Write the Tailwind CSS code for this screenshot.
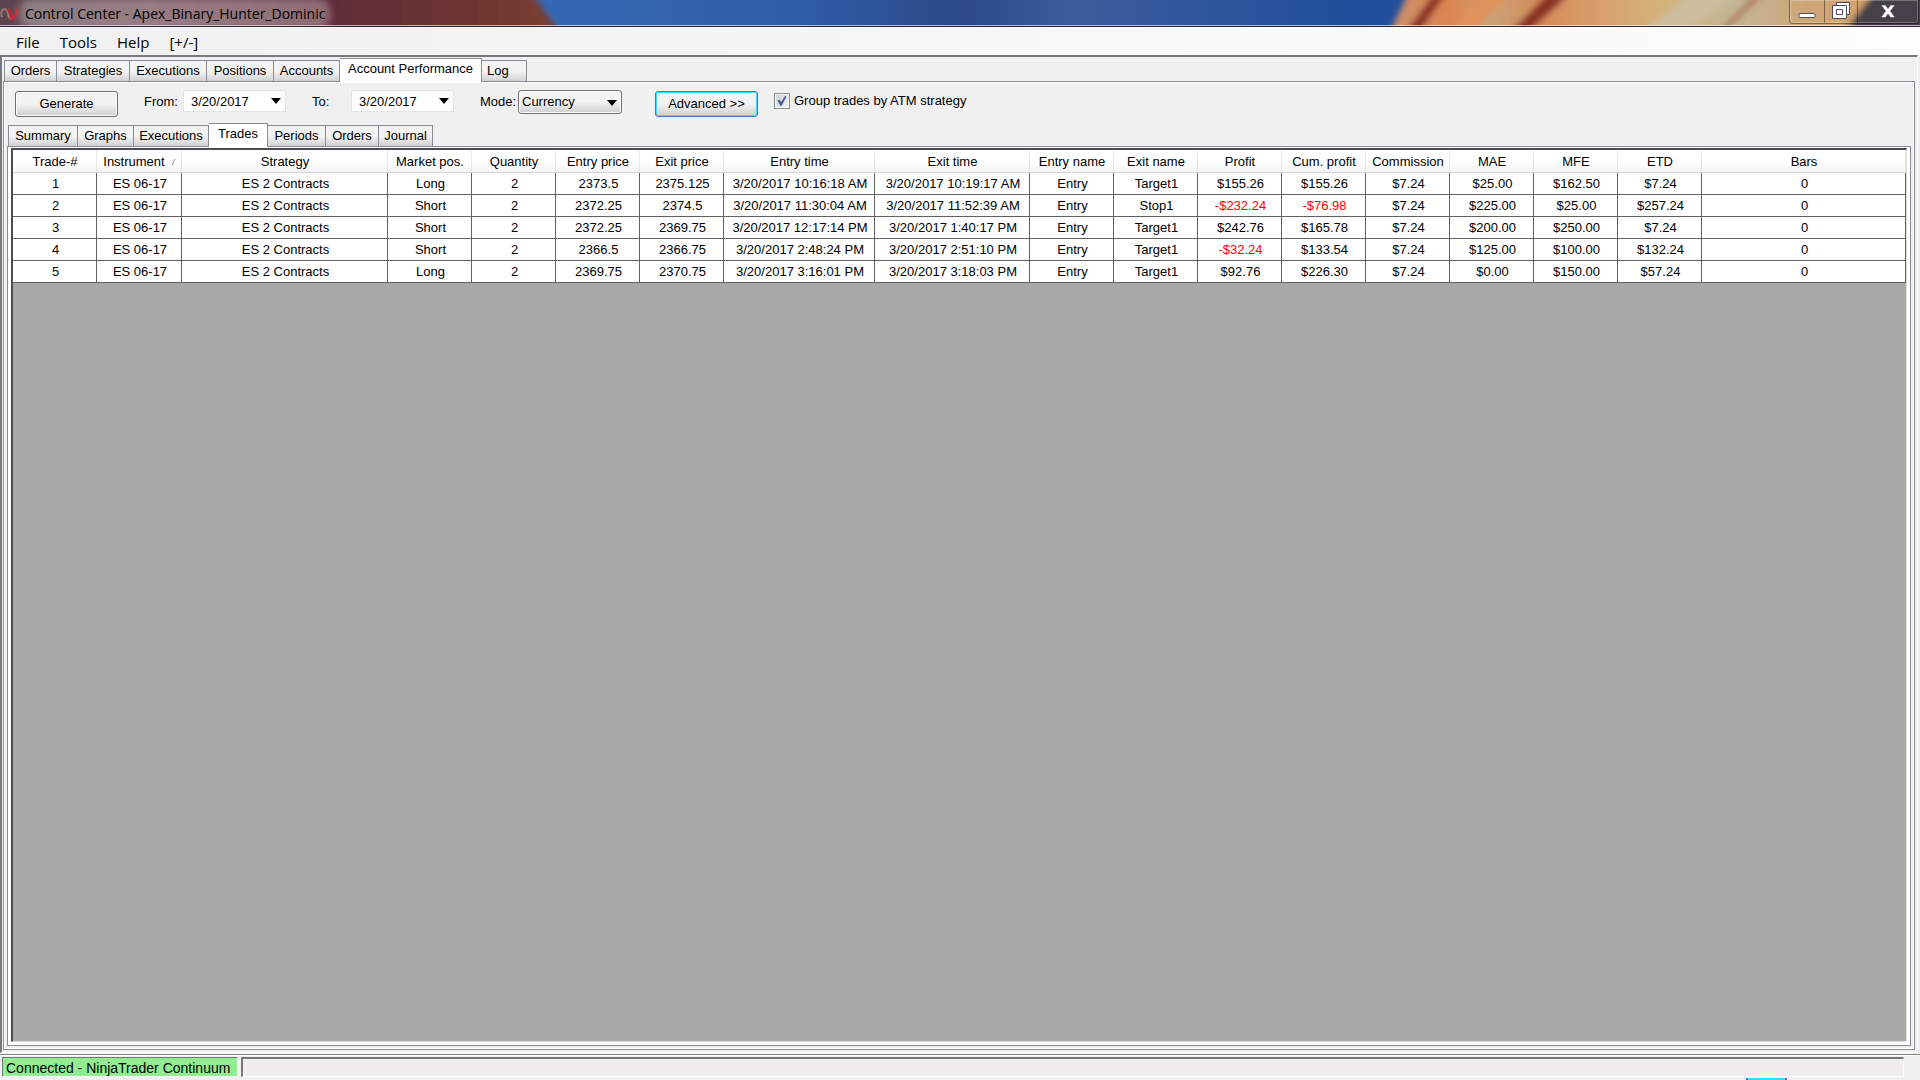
<!DOCTYPE html>
<html lang="en">
<head>
    <meta charset="UTF-8">
    <meta name="viewport" content="width=device-width, initial-scale=1.0">
    <title>Control Center - Apex_Binary_Hunter_Dominic</title>
    <script src="https://cdn.jsdelivr.net/npm/@tailwindcss/browser@4"></script>
</head>
<body class="h-screen flex flex-col overflow-hidden bg-[#f0f0f0] font-['Liberation_Sans',Arial,sans-serif] text-[13px] leading-4 text-black">

    <!-- Title bar -->
    <header class="relative h-[27px] shrink-0 overflow-hidden border-b border-[#33283a] flex items-start justify-between">
        <svg class="absolute inset-0 w-full h-full" viewBox="0 0 1920 26" preserveAspectRatio="none" aria-hidden="true">
            <defs>
                <linearGradient id="rock">
                    <stop offset="0" stop-color="#5a4550"/><stop offset=".3" stop-color="#6b4450"/><stop offset=".6" stop-color="#5f2c38"/><stop offset=".85" stop-color="#6e3331"/><stop offset="1" stop-color="#7c4032"/>
                </linearGradient>
                <linearGradient id="sky">
                    <stop offset="0" stop-color="#3568b3"/><stop offset=".3" stop-color="#3568b3"/><stop offset=".42" stop-color="#2f5ca6"/><stop offset=".5" stop-color="#2c4a88"/><stop offset=".56" stop-color="#3c5c9c"/><stop offset=".7" stop-color="#224f9b"/>
                </linearGradient>
                <linearGradient id="sand">
                    <stop offset="0" stop-color="#c9926e"/><stop offset=".12" stop-color="#dc8450"/><stop offset=".2" stop-color="#c8a378"/><stop offset=".3" stop-color="#d78a58"/><stop offset=".42" stop-color="#d8a070"/><stop offset=".55" stop-color="#d3b47c"/><stop offset=".68" stop-color="#c3b697"/><stop offset=".82" stop-color="#cfa577"/><stop offset="1" stop-color="#d8a467"/>
                </linearGradient>
                <filter id="soft" x="-5%" y="-50%" width="110%" height="200%"><feGaussianBlur stdDeviation="3"/></filter>
            </defs>
            <rect width="1920" height="26" fill="url(#sky)"/>
            <g filter="url(#soft)">
                <path d="M-20-10H530L562 36H-20z" fill="url(#rock)"/>
                <path d="M1410-10H1900L1840 36H1388z" fill="url(#sand)"/>
                <path d="M1434-6L1404 34H1418L1446-6zM1548-6L1508 34H1526L1570-6z" fill="#8a2f20"/>
                <path d="M1480-6L1450 34H1470L1510-6z" fill="#e0935c"/>
                <path d="M1690-6L1640 34H1680L1740-6z" fill="#cbbd9d"/>
                <path d="M1755-6L1715 34H1722L1765-6z" fill="#b07a54"/>
                <path d="M1876-10H1940V36H1840z" fill="#453f49"/>
            </g>
            <path d="M0 25.500H1920" stroke="#fff" stroke-opacity=".6"/>
        </svg>
        <div class="relative flex items-center gap-1.5 h-7">
            <svg class="w-[19px] h-4" viewBox="0 0 19 16" aria-hidden="true">
                <path d="M2 11Q0 4 4 3Q7 3 8 8Q9 13 12 13" fill="none" stroke="#93796f" stroke-width="2"/>
                <path d="M8 3Q11 6 12 13Q17 10 17 3" fill="none" stroke="#c02535" stroke-width="3"/>
            </svg>
            <h1 class="font-['Open_Sans','Noto_Sans',sans-serif] text-[14px] leading-5 rounded-lg bg-white/30 shadow-[0_0_8px_6px_rgba(255,255,255,0.3)]">Control Center - Apex_Binary_Hunter_Dominic</h1>
        </div>
        <div class="relative flex h-6 mr-px rounded-b border border-t-0 border-black/40 shadow-[inset_0_0_0_1px_rgba(255,255,255,0.25)]">
            <button type="button" aria-label="Minimize" class="w-[35px] flex justify-center border-r border-black/40">
                <svg class="w-[18px] h-5" viewBox="0 0 18 20"><rect x="1" y="13.500" width="16" height="4" rx="1" fill="#fff" stroke="#4e4c5c"/></svg>
            </button>
            <button type="button" aria-label="Restore" class="w-[33px] flex justify-center border-r border-black/40">
                <svg class="w-5 h-5" viewBox="0 0 20 20"><path fill="#fff" stroke="#4e4c5c" d="M5.500 2.500h13v12h-13z"/><path fill="#fff" fill-rule="evenodd" stroke="#4e4c5c" d="M1.500 5.500h14v13h-14zM5.500 9.500v5h6v-5z"/></svg>
            </button>
            <button type="button" aria-label="Close" class="w-[60px] flex justify-center">
                <svg class="w-4 h-5" viewBox="0 0 16 20"><path fill="#fff" stroke="#4e4c5c" stroke-width=".7" d="M1 5h4.500L8 8.500L10.500 5H15L10.500 11L15 17.500H10.500L8 14L5.500 17.500H1L5.500 11z"/></svg>
            </button>
        </div>
    </header>

    <!-- Menu -->
    <nav class="h-7 shrink-0 flex items-center gap-5 pl-4 pt-px bg-linear-to-r from-[#f0f0f0] to-[#fdfdfd] font-['Open_Sans','Noto_Sans',sans-serif] text-[15px] leading-5">
        <button type="button">File</button>
        <button type="button">Tools</button>
        <button type="button">Help</button>
        <button type="button">[+/-]</button>
    </nav>

    <main class="flex-1 min-h-0 flex flex-col mr-0.5 border-t-2 border-l-2 border-t-[#77777a] border-l-[#77777a] border-r border-b border-r-white border-b-white pt-px pr-0.5 pb-0.5 pl-px">
        <!-- Main tabs -->
        <div role="tablist" class="relative z-10 -mb-px flex items-end pl-px h-6">
            <button type="button" role="tab" class="h-[22px] w-[53px] border border-[#898c95] bg-linear-to-b from-[#f3f3f3] from-50% to-[#d2d2d2]">Orders</button>
            <button type="button" role="tab" class="h-[22px] w-[73px] border border-l-0 border-[#898c95] bg-linear-to-b from-[#f3f3f3] from-50% to-[#d2d2d2]">Strategies</button>
            <button type="button" role="tab" class="h-[22px] w-[77px] border border-l-0 border-[#898c95] bg-linear-to-b from-[#f3f3f3] from-50% to-[#d2d2d2]">Executions</button>
            <button type="button" role="tab" class="h-[22px] w-[67px] border border-l-0 border-[#898c95] bg-linear-to-b from-[#f3f3f3] from-50% to-[#d2d2d2]">Positions</button>
            <button type="button" role="tab" class="h-[22px] w-[66px] border border-l-0 border-[#898c95] bg-linear-to-b from-[#f3f3f3] from-50% to-[#d2d2d2]">Accounts</button>
            <button type="button" role="tab" aria-selected="true" class="h-6 w-[142px] pb-1 border border-l-0 border-b-0 border-[#898c95] bg-white">Account Performance</button>
            <button type="button" role="tab" class="h-[22px] w-[45px] pl-[5px] text-left border border-l-0 border-[#898c95] bg-linear-to-b from-[#f3f3f3] from-50% to-[#d2d2d2]">Log</button>
        </div>

        <section class="flex-1 min-h-0 flex flex-col border border-[#898c95] shadow-[inset_0_0_0_1px_#fff] pt-1 pr-[3px] pb-[3px] pl-[3px]">
            <form class="flex items-start h-[37px] pt-1 pl-2">
                <button type="button" class="mt-px h-[26px] w-[103px] rounded-[3px] border border-[#707070] bg-linear-to-b from-[#f2f2f2] from-50% to-[#cfcfcf] shadow-[inset_0_0_0_1px_#fcfcfc]">Generate</button>
                <label for="from" class="ml-[26px] mt-1 w-[39px]">From:</label>
                <div class="relative w-[103px] h-[22px]">
                    <input id="from" type="text" value="3/20/2017" class="w-full h-full pl-[7px] bg-white border border-[#dfe3ea] outline-none">
                    <svg class="absolute right-[5px] top-2 w-[10px] h-[6px]" viewBox="0 0 10 6"><path d="M0 0H10L5 6z"/></svg>
                </div>
                <label for="to" class="ml-[26px] mt-1 w-[39px]">To:</label>
                <div class="relative w-[103px] h-[22px]">
                    <input id="to" type="text" value="3/20/2017" class="w-full h-full pl-[7px] bg-white border border-[#dfe3ea] outline-none">
                    <svg class="absolute right-[5px] top-2 w-[10px] h-[6px]" viewBox="0 0 10 6"><path d="M0 0H10L5 6z"/></svg>
                </div>
                <label for="mode" class="ml-[26px] mt-1 w-[38px]">Mode:</label>
                <div class="relative w-[104px] h-6">
                    <select id="mode" class="appearance-none w-full h-full pl-[3px] rounded-[3px] border border-[#707070] bg-linear-to-b from-[#f2f2f2] from-50% to-[#cfcfcf] shadow-[inset_0_0_0_1px_#fcfcfc]">
                        <option>Currency</option>
                    </select>
                    <svg class="absolute right-[5px] top-[10px] w-[10px] h-[6px] pointer-events-none" viewBox="0 0 10 6"><path d="M0 0H10L5 6z"/></svg>
                </div>
                <button type="button" class="ml-[33px] mt-px h-[26px] w-[103px] rounded-[3px] border border-[#3c7fb1] bg-linear-to-b from-[#f2f2f2] from-50% to-[#cfcfcf] shadow-[inset_0_0_0_1px_#45d8fb]">Advanced &gt;&gt;</button>
                <label class="ml-4 mt-[3px] flex items-center gap-1">
                    <span class="relative w-4 h-4">
                        <input type="checkbox" checked class="peer appearance-none block w-4 h-4 border border-[#8e8f8f] bg-linear-to-br from-[#cbcfd5] to-[#f6f6f6] shadow-[inset_0_0_0_1px_#f4f4f4]">
                        <svg class="absolute inset-0 hidden peer-checked:block pointer-events-none" viewBox="0 0 16 16"><path d="M3.500 7.500L5.500 6.500L7 9L11 3L12.500 3.500L7.500 13H6.500z" fill="#4a5f97"/></svg>
                    </span>
                    Group trades by ATM strategy
                </label>
            </form>

            <!-- Report tabs -->
            <div role="tablist" class="relative z-10 -mb-px flex items-end pl-px h-6">
                <button type="button" role="tab" class="h-[22px] w-[70px] border border-[#898c95] bg-linear-to-b from-[#f3f3f3] from-50% to-[#d2d2d2]">Summary</button>
                <button type="button" role="tab" class="h-[22px] w-[56px] border border-l-0 border-[#898c95] bg-linear-to-b from-[#f3f3f3] from-50% to-[#d2d2d2]">Graphs</button>
                <button type="button" role="tab" class="h-[22px] w-[75px] border border-l-0 border-[#898c95] bg-linear-to-b from-[#f3f3f3] from-50% to-[#d2d2d2]">Executions</button>
                <button type="button" role="tab" aria-selected="true" class="h-6 w-[59px] pb-1 border border-l-0 border-b-0 border-[#898c95] bg-white">Trades</button>
                <button type="button" role="tab" class="h-[22px] w-[58px] border border-l-0 border-[#898c95] bg-linear-to-b from-[#f3f3f3] from-50% to-[#d2d2d2]">Periods</button>
                <button type="button" role="tab" class="h-[22px] w-[53px] border border-l-0 border-[#898c95] bg-linear-to-b from-[#f3f3f3] from-50% to-[#d2d2d2]">Orders</button>
                <button type="button" role="tab" class="h-[22px] w-[54px] border border-l-0 border-[#898c95] bg-linear-to-b from-[#f3f3f3] from-50% to-[#d2d2d2]">Journal</button>
            </div>

            <div class="flex-1 min-h-0 flex border border-[#898c95] bg-white pt-px pr-[3px] pb-[3px] pl-[3px]">
                <div class="flex-1 bg-[#a9a9a9] border-t-2 border-l-2 border-t-[#4b4b4e] border-l-[#4b4b4e] border-r border-b border-r-[#e0e0e0] border-b-[#e0e0e0]">
                    <table class="w-full table-fixed border-separate border-spacing-0 bg-white text-center">
                        <colgroup>
                            <col class="w-[84px]"><col class="w-[85px]"><col class="w-[206px]">
                            <col class="w-[84px]"><col class="w-[84px]"><col class="w-[84px]"><col class="w-[84px]">
                            <col class="w-[151px]"><col class="w-[155px]">
                            <col class="w-[84px]"><col class="w-[84px]"><col class="w-[84px]"><col class="w-[84px]">
                            <col class="w-[84px]"><col class="w-[84px]"><col class="w-[84px]"><col class="w-[84px]">
                            <col>
                        </colgroup>
                        <thead>
                            <tr class="h-[23px] whitespace-nowrap bg-linear-to-b from-white from-50% to-[#f2f3f5] *:border-r *:border-b *:border-r-[#e6e7ea] *:border-b-[#d5d5d5] *:p-0 *:pt-px *:pl-px *:font-normal">
                                <th>Trade-#</th>
                                <th><span class="inline-flex items-center gap-[7px]">Instrument <svg class="w-1 h-2" viewBox="0 0 4 8"><path d="M0 7L3 1" stroke="#8a8a8a"/></svg></span></th>
                                <th>Strategy</th><th>Market pos.</th><th>Quantity</th><th>Entry price</th><th>Exit price</th><th>Entry time</th><th>Exit time</th><th>Entry name</th><th>Exit name</th><th>Profit</th><th>Cum. profit</th><th>Commission</th><th>MAE</th><th>MFE</th><th>ETD</th><th>Bars</th>
                            </tr>
                        </thead>
                        <tbody id="trades"></tbody>
                    </table>
                </div>
            </div>
        </section>
    </main>

    <!-- Status bar -->
    <footer class="h-[26px] shrink-0 mt-px border-t border-[#85857c] flex items-start gap-[3px] pt-0.5 pl-0.5 pr-4 shadow-[inset_0_1px_0_#fff]">
        <div class="h-5 w-[236px] px-[3px] bg-[#90ee90] border border-t-[#6f7b6f] border-l-[#6f7b6f] border-r-white border-b-white whitespace-nowrap text-[14px] leading-5">Connected - NinjaTrader Continuum</div>
        <div class="flex-1 h-5 bg-[#f0eded] border-t-2 border-l-2 border-r border-b border-t-[#77777a] border-l-[#77777a] border-r-white border-b-white"></div>
    </footer>
    <div class="absolute bottom-0 right-[133px] w-[41px] h-0.5 bg-[#35dcff] border-x-2 border-[#a04bd8]"></div>

    <script>
        const trades = [
            ['1', 'ES 06-17', 'ES 2 Contracts', 'Long', '2', '2373.5', '2375.125', '3/20/2017 10:16:18 AM', '3/20/2017 10:19:17 AM', 'Entry', 'Target1', '$155.26', '$155.26', '$7.24', '$25.00', '$162.50', '$7.24', '0'],
            ['2', 'ES 06-17', 'ES 2 Contracts', 'Short', '2', '2372.25', '2374.5', '3/20/2017 11:30:04 AM', '3/20/2017 11:52:39 AM', 'Entry', 'Stop1', '-$232.24', '-$76.98', '$7.24', '$225.00', '$25.00', '$257.24', '0'],
            ['3', 'ES 06-17', 'ES 2 Contracts', 'Short', '2', '2372.25', '2369.75', '3/20/2017 12:17:14 PM', '3/20/2017 1:40:17 PM', 'Entry', 'Target1', '$242.76', '$165.78', '$7.24', '$200.00', '$250.00', '$7.24', '0'],
            ['4', 'ES 06-17', 'ES 2 Contracts', 'Short', '2', '2366.5', '2366.75', '3/20/2017 2:48:24 PM', '3/20/2017 2:51:10 PM', 'Entry', 'Target1', '-$32.24', '$133.54', '$7.24', '$125.00', '$100.00', '$132.24', '0'],
            ['5', 'ES 06-17', 'ES 2 Contracts', 'Long', '2', '2369.75', '2370.75', '3/20/2017 3:16:01 PM', '3/20/2017 3:18:03 PM', 'Entry', 'Target1', '$92.76', '$226.30', '$7.24', '$0.00', '$150.00', '$57.24', '0']
        ];

        const tbody = document.getElementById('trades');
        trades.forEach(function(trade) {
            const row = tbody.insertRow();
            row.className = 'h-[22px]';
            trade.forEach(function(value) {
                const cell = row.insertCell();
                cell.className = 'p-0 pl-0.5 border-r border-b border-[#606060] whitespace-nowrap';
                // Losses are shown in red
                if (value.startsWith('-$')) {
                    cell.classList.add('text-[#ff0000]');
                }
                cell.textContent = value;
            });
        });
    </script>
</body>
</html>
